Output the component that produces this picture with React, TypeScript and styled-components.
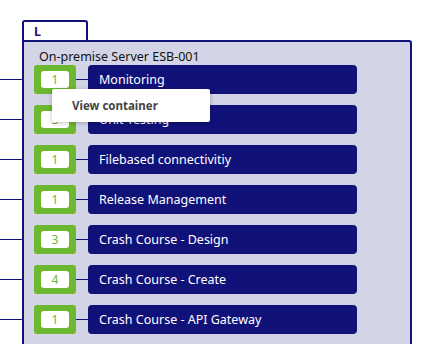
import React from "react";
import styled, { createGlobalStyle } from "styled-components";

const Global = createGlobalStyle`
  html, body { margin: 0; padding: 0; background: #ffffff; }
  body { font-family: "Noto Sans", "Open Sans", sans-serif; overflow: hidden; }
`;

const NAVY = "#11117a";
const GREEN = "#6cb830";

const Page = styled.div`
  display: flex;
  padding-top: 20px;
  height: 324px;
  overflow: hidden;
`;

const Lines = styled.div`
  width: 22px;
  flex: none;
  display: flex;
  flex-direction: column;
  gap: 11px;
  padding-top: 45px;
`;

const LineSlot = styled.div`
  height: 29px;
  display: flex;
  align-items: center;
  &::before {
    content: "";
    display: block;
    width: 100%;
    height: 1px;
    background: ${NAVY};
  }
`;

const Group = styled.div`
  width: 390px;
  display: flex;
  flex-direction: column;
  position: relative;
`;

const Tab = styled.div`
  width: 52px;
  height: 18px;
  border: 2px solid ${NAVY};
  border-bottom: none;
  border-radius: 3px 3px 0 0;
  background: #ffffff;
  font-size: 12.5px;
  font-weight: 700;
  color: #2d0d6e;
  padding-left: 10px;
  line-height: 20px;
  box-sizing: content-box;
`;

const Body = styled.div`
  flex: 1;
  background: #d3d5e6;
  border: 2px solid ${NAVY};
  border-radius: 0 3px 0 0;
  padding: 6px 0 20px 10px;
`;

const Title = styled.div`
  font-size: 12.5px;
  color: #111111;
  padding-left: 5px;
  height: 17px;
  line-height: 17px;
`;

const Rows = styled.div`
  display: flex;
  flex-direction: column;
  gap: 11px;
`;

const Row = styled.div`
  display: flex;
  align-items: center;
  height: 29px;
`;

const Badge = styled.div`
  width: 42px;
  height: 29px;
  background: ${GREEN};
  border-radius: 3px;
  display: flex;
  align-items: center;
  justify-content: center;
  flex: none;
`;

const Count = styled.div`
  width: 28px;
  height: 17px;
  background: #ffffff;
  border-radius: 3px;
  color: ${GREEN};
  font-size: 12px;
  line-height: 18px;
  text-align: center;
`;

const Connector = styled.div`
  width: 12px;
  height: 1px;
  background: ${NAVY};
  flex: none;
`;

const Service = styled.div`
  width: 269px;
  height: 29px;
  background: ${NAVY};
  border-radius: 4px;
  color: #ffffff;
  font-size: 12.5px;
  line-height: 30px;
  padding-left: 11px;
  box-sizing: border-box;
`;

const Menu = styled.div`
  position: absolute;
  left: 30px;
  top: 69px;
  width: 158px;
  height: 33px;
  background: #ffffff;
  border-radius: 2px;
  box-shadow: 0 1px 4px rgba(0, 0, 0, 0.25);
  display: flex;
  align-items: center;
  padding-left: 20px;
  box-sizing: border-box;
  font-size: 11.5px;
  font-weight: 700;
  color: #444444;
`;

const items = [
  { n: 1, name: "Monitoring" },
  { n: 3, name: "Unit Testing" },
  { n: 1, name: "Filebased connectivitiy" },
  { n: 1, name: "Release Management" },
  { n: 3, name: "Crash Course - Design" },
  { n: 4, name: "Crash Course - Create" },
  { n: 1, name: "Crash Course - API Gateway" },
];

export default function App() {
  return (
    <>
      <Global />
      <Page>
        <Lines>
          {items.map((_, i) => (
            <LineSlot key={i} />
          ))}
        </Lines>
        <Group>
          <Tab>L</Tab>
          <Body>
            <Title>On-premise Server ESB-001</Title>
            <Rows>
              {items.map((it, i) => (
                <Row key={i}>
                  <Badge>
                    <Count>{it.n}</Count>
                  </Badge>
                  <Connector />
                  <Service>{it.name}</Service>
                </Row>
              ))}
            </Rows>
          </Body>
          <Menu>View container</Menu>
        </Group>
      </Page>
    </>
  );
}
